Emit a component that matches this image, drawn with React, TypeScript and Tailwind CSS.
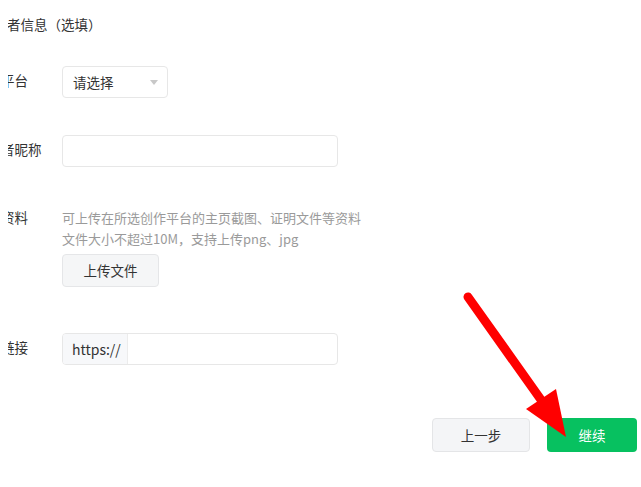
import React from 'react';

const Label = ({ text, tall = true }: { text: string; tall?: boolean }) => (
  <div className={`w-[88px] shrink-0 whitespace-nowrap text-[13.5px] text-[#333] ${tall ? 'leading-[29px]' : 'leading-[21px]'}`}>
    {text}
  </div>
);

const App = () => {
  return (
    <div className="relative w-[641px] h-[487px] overflow-hidden bg-white font-['Noto_Sans_CJK_SC',sans-serif]">
      {/* form area, clipped at the left edge like the screenshot */}
      <div className="ml-[8px] overflow-hidden">
        <div className="pt-[14px] ml-[-28px] text-[13.5px] leading-[21px] text-[#333] whitespace-nowrap">
          创作者信息（选填）
        </div>

        <div className="ml-[-34px]">
          {/* 平台 */}
          <div className="flex mt-[31px]">
            <Label text="创作平台" />
            <div className="w-[106px] h-[32px] flex items-center justify-between pl-[10px] pr-[9px] border border-[#e7e7e7] rounded-[4px] text-[13.5px] text-[#333]">
              <span>请选择</span>
              <svg width="8" height="5" viewBox="0 0 8 5">
                <path d="M0 0h8L4 5z" fill="#c8c8c8" />
              </svg>
            </div>
          </div>

          {/* 昵称 */}
          <div className="flex mt-[37px]">
            <Label text="创作者昵称" />
            <div className="w-[276px] h-[32px] border border-[#e7e7e7] rounded-[4px]" />
          </div>

          {/* 资料 */}
          <div className="flex mt-[40px]">
            <Label text="证明资料" tall={false} />
            <div>
              <p className="text-[13px] leading-[21px] text-[#9a9a9a] whitespace-nowrap">
                可上传在所选创作平台的主页截图、证明文件等资料
              </p>
              <p className="text-[13px] leading-[21px] text-[#9a9a9a] whitespace-nowrap">
                文件大小不超过10M，支持上传png、jpg
              </p>
              <button className="mt-[5px] w-[97px] h-[33px] bg-[#f5f6f7] border border-[#e5e6e8] rounded-[4px] text-[13.5px] text-[#333]">
                上传文件
              </button>
            </div>
          </div>

          {/* 链接 */}
          <div className="flex mt-[46px]">
            <Label text="主页链接" />
            <div className="w-[276px] h-[32px] flex border border-[#e7e7e7] rounded-[4px] overflow-hidden">
              <div className="w-[65px] bg-[#f7f8fa] border-r border-[#ececec] flex items-center pl-[9px] text-[14px] text-[#333]">
                https://
              </div>
              <div className="flex-1" />
            </div>
          </div>
        </div>
      </div>

      <div className="flex justify-end gap-[17px] pr-[4px] mt-[53px]">
        <button className="w-[98px] h-[34px] bg-[#f4f5f7] border border-[#e4e5e7] rounded-[4px] text-[13.5px] text-[#333]">
          上一步
        </button>
        <button className="w-[90px] h-[34px] bg-[#07c160] rounded-[4px] text-[13.5px] text-white">
          继续
        </button>
      </div>

      {/* annotation arrow */}
      <svg className="absolute inset-0 pointer-events-none" width="641" height="487">
        <line x1="468" y1="297" x2="544" y2="404" stroke="#ff0000" strokeWidth="9" strokeLinecap="round" />
        <polygon points="526,409 556,389 566,437" fill="#ff0000" />
      </svg>
    </div>
  );
};

export default App;
